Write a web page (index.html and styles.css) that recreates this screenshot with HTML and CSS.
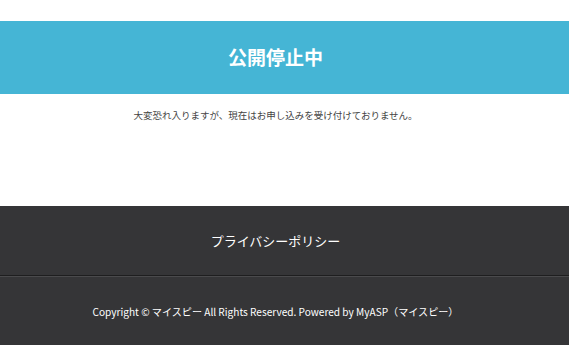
FILE: index.html
```html
<!DOCTYPE html>
<html lang="ja">
<head>
    <meta charset="UTF-8">
    <meta name="viewport" content="width=device-width, initial-scale=1.0">
    <title>公開停止中</title>
    <link rel="stylesheet" href="styles.css">
</head>
<body>
    <div class="topSpace"></div>

    <!-- Title band -->
    <header class="titleBand">
        <h1>公開停止中</h1>
    </header>

    <main class="content">
        <p>大変恐れ入りますが、現在はお申し込みを受け付けておりません。</p>
    </main>

    <footer class="footer">
        <div class="footerLinks">
            <a href="#">プライバシーポリシー</a>
        </div>
        <div class="copyright">
            Copyright © マイスピー All Rights Reserved. Powered by MyASP（マイスピー）
        </div>
    </footer>
</body>
</html>
```

FILE: styles.css
```css
body { margin: 0; font-family: "Noto Sans CJK JP", "Noto Sans", sans-serif; background: #fff; color: #444; }
.topSpace { height: 21px; }

/* centered blocks sit a little left of the middle, as in the original */
.titleBand, .content p, .footerLinks, .copyright { padding-right: 18px; }

.titleBand {
    height: 73px;
    background: #45b5d5;
    display: flex;
    align-items: center;
    justify-content: center;
}
.titleBand h1 { margin: 0 0 3px; color: #fff; font-size: 19px; font-weight: bold; }

.content { height: 112px; }
.content p { margin: 0; padding-top: 14px; text-align: center; font-size: 9.5px; color: #444; }

.footer { background: #353537; color: #fff; }
.footerLinks {
    height: 69px;
    display: flex;
    align-items: center;
    justify-content: center;
    border-bottom: 1px solid #1e1e1f;
}
.footerLinks a { color: #fff; text-decoration: none; font-size: 13px; }
.copyright {
    height: 68px;
    display: flex;
    align-items: center;
    justify-content: center;
    font-size: 10.1px;
    border-top: 1px solid #4a4a4c;
}
```
